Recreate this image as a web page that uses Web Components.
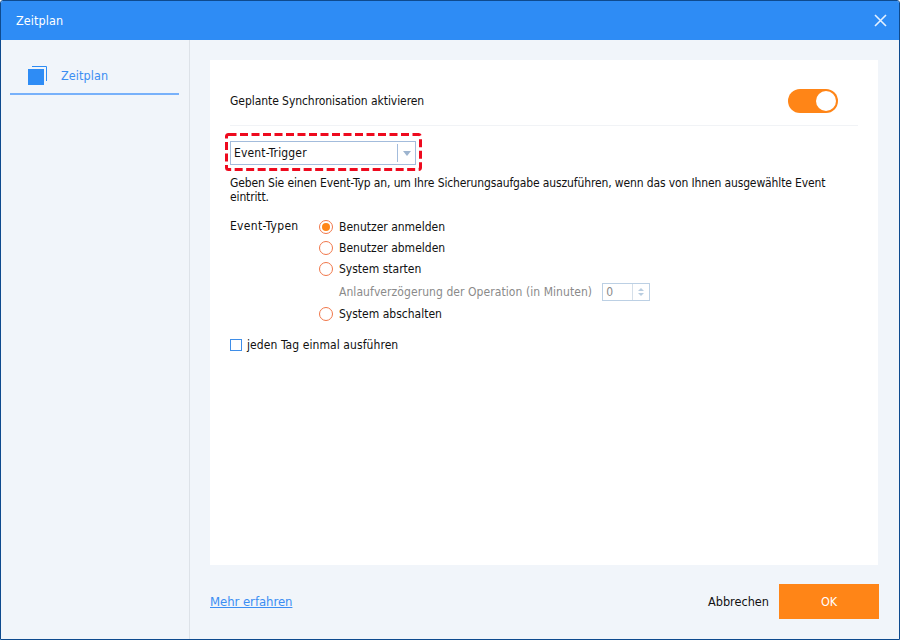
<!DOCTYPE html>
<html lang="de">
<head>
<meta charset="utf-8">
<title>Zeitplan</title>
<style>
  html, body { margin: 0; height: 100%; background: #fff; }
  body { font: 12px "DejaVu Sans", sans-serif; font-stretch: condensed; color: #111; }
</style>
</head>
<body>
<schedule-dialog></schedule-dialog>

<script>
class TitleBar extends HTMLElement {
  constructor() {
    super();
    this.attachShadow({ mode: 'open' });
    this.shadowRoot.innerHTML = `
      <style>
        :host {
          display: flex;
          align-items: center;
          justify-content: space-between;
          height: 39px;
          padding: 0 12px 0 15px;
          background: #2e8cf5;
          color: #fff;
          font-size: 12.5px;
          letter-spacing: .1px;
          flex: none;
        }
        svg { display: block; }
      </style>
      <span><slot></slot></span>
      <svg width="13" height="13" viewBox="0 0 13 13">
        <path d="M1 1l11 11M12 1L1 12" stroke="#e4f1ff" stroke-width="1.6" fill="none"/>
      </svg>
    `;
  }
}

class SideNav extends HTMLElement {
  constructor() {
    super();
    this.attachShadow({ mode: 'open' });
    this.shadowRoot.innerHTML = `
      <style>
        :host {
          display: block;
          background: #f1f5fa;
          border-right: 1px solid #dde2e8;
          padding-top: 20px;
        }
        .item {
          display: flex;
          align-items: center;
          gap: 14px;
          height: 30px;
          margin: 0 10px 0 9px;
          padding: 0 0 3px 18px;
          border-bottom: 2px solid #78b1fa;
          color: #3b8ef3;
          font-size: 12.5px;
          letter-spacing: .1px;
        }
        svg { display: block; }
      </style>
      <div class="item">
        <svg width="19" height="19" viewBox="0 0 19 19">
          <path d="M4 .5h14.5V15" fill="none" stroke="#2e8cf5" stroke-width="1"/>
          <rect x="0" y="3" width="16" height="16" fill="#2e8cf5"/>
        </svg>
        <slot></slot>
      </div>
    `;
  }
}

class ToggleSwitch extends HTMLElement {
  constructor() {
    super();
    this.attachShadow({ mode: 'open' });
    this.shadowRoot.innerHTML = `
      <style>
        :host {
          display: flex;
          justify-content: flex-end;
          align-items: center;
          box-sizing: border-box;
          width: 50px;
          height: 24px;
          padding-right: 2px;
          border-radius: 12px;
          background: #ff8517;
        }
        i { width: 20px; height: 20px; border-radius: 50%; background: #fff; }
      </style>
      <i></i>
    `;
  }
}

class SelectBox extends HTMLElement {
  constructor() {
    super();
    this.attachShadow({ mode: 'open' });
    this.shadowRoot.innerHTML = `
      <style>
        :host {
          display: flex;
          align-items: center;
          box-sizing: border-box;
          width: 186px;
          height: 24px;
          border: 1px solid #a3bcdc;
          background: #fff;
          padding-left: 3px;
          letter-spacing: .15px;
        }
        .label { flex: 1; }
        .sep { width: 1px; height: 18px; background: #a3bcdc; }
        .arrow { width: 17px; display: flex; justify-content: center; }
        .arrow i {
          border: 4.5px solid transparent;
          border-top: 5px solid #9db4cf;
          border-bottom: 0;
        }
      </style>
      <span class="label"><slot></slot></span>
      <span class="sep"></span>
      <span class="arrow"><i></i></span>
    `;
  }
}

class RadioOption extends HTMLElement {
  constructor() {
    super();
    this.attachShadow({ mode: 'open' });
    this.shadowRoot.innerHTML = `
      <style>
        :host {
          display: flex;
          align-items: center;
          gap: 6px;
          height: 21px;
        }
        .dot {
          box-sizing: border-box;
          width: 14px;
          height: 14px;
          border: 1px solid #f0774a;
          border-radius: 50%;
          display: flex;
          align-items: center;
          justify-content: center;
          background: #fff;
        }
        :host([checked]) .dot::after {
          content: '';
          width: 8px;
          height: 8px;
          border-radius: 50%;
          background: #ff8517;
        }
      </style>
      <span class="dot"></span>
      <slot></slot>
    `;
  }
}

class SpinBox extends HTMLElement {
  constructor() {
    super();
    this.attachShadow({ mode: 'open' });
    this.shadowRoot.innerHTML = `
      <style>
        :host {
          display: flex;
          align-items: center;
          box-sizing: border-box;
          width: 48px;
          height: 18px;
          border: 1px solid #bcd0e4;
          background: #fff;
          color: #8a8a8a;
          padding-left: 3px;
        }
        .value { flex: 1; }
        .sep { width: 1px; height: 16px; background: #d5dfe9; }
        .arrows {
          width: 16px;
          display: flex;
          flex-direction: column;
          align-items: center;
          gap: 2px;
        }
        .arrows i { border: 3.5px solid transparent; }
        .up { border-bottom: 3.5px solid #b9cde0 !important; border-top: 0 !important; }
        .down { border-top: 3.5px solid #b9cde0 !important; border-bottom: 0 !important; }
      </style>
      <span class="value"><slot></slot></span>
      <span class="sep"></span>
      <span class="arrows"><i class="up"></i><i class="down"></i></span>
    `;
  }
}

class SchedulePanel extends HTMLElement {
  constructor() {
    super();
    this.attachShadow({ mode: 'open' });
    this.shadowRoot.innerHTML = `
      <style>
        :host {
          display: block;
          background: #fff;
          padding: 0 20px;
          height: 505px;
        }
        .head {
          display: flex;
          align-items: center;
          justify-content: space-between;
          height: 66px;
          padding: 16px 20px 0 0;
          border-bottom: 1px solid #f1f3f6;
          box-sizing: border-box;
          margin-bottom: 7px;
          letter-spacing: -.06px;
        }
        .trigger {
          position: relative;
          display: inline-block;
          vertical-align: top;
          margin-left: -5px;
          padding: 8px 6px 6px 5px;
        }
        .trigger svg { position: absolute; left: 0; top: 0; }
        .desc { margin: 5px 0 12px; line-height: 14px; letter-spacing: -.13px; }
        .types { display: flex; }
        .types .name { width: 89px; padding-top: 3px; letter-spacing: .3px; }
        .delay {
          display: flex;
          align-items: center;
          gap: 10px;
          height: 22px;
          padding: 2px 0 0 20px;
          color: #8a8a8a;
          letter-spacing: .07px;
        }
        .once {
          display: flex;
          align-items: center;
          gap: 5px;
          margin-top: 10px;
          height: 21px;
          letter-spacing: .08px;
        }
        .box {
          box-sizing: border-box;
          width: 12px;
          height: 12px;
          border: 1px solid #3f8ee8;
          background: #fff;
        }
      </style>
      <div class="head">
        <span>Geplante Synchronisation aktivieren</span>
        <toggle-switch></toggle-switch>
      </div>
      <div class="trigger">
        <svg width="197" height="38" viewBox="0 0 197 38">
          <rect x="1.5" y="1.5" width="194" height="35" rx="2" fill="none" stroke="#ee0a1e" stroke-width="3" stroke-dasharray="8 3.5"/>
        </svg>
        <select-box>Event-Trigger</select-box>
      </div>
      <p class="desc">Geben Sie einen Event-Typ an, um Ihre Sicherungsaufgabe auszuführen, wenn das von Ihnen ausgewählte Event eintritt.</p>
      <div class="types">
        <span class="name">Event-Typen</span>
        <div>
          <radio-option checked>Benutzer anmelden</radio-option>
          <radio-option>Benutzer abmelden</radio-option>
          <radio-option>System starten</radio-option>
          <div class="delay"><span>Anlaufverzögerung der Operation (in Minuten)</span><spin-box>0</spin-box></div>
          <radio-option>System abschalten</radio-option>
        </div>
      </div>
      <div class="once"><span class="box"></span><span>jeden Tag einmal ausführen</span></div>
    `;
  }
}

class DialogFooter extends HTMLElement {
  constructor() {
    super();
    this.attachShadow({ mode: 'open' });
    this.shadowRoot.innerHTML = `
      <style>
        :host {
          display: flex;
          align-items: center;
          height: 35px;
          margin-top: 19px;
          margin-right: -1px;
        }
        a { color: #3b8ef3; text-decoration: underline; font-size: 13px; letter-spacing: -.05px; }
        .cancel { margin-left: auto; margin-right: 10px; color: #111; font-size: 12.6px; }
        .ok {
          width: 100px;
          height: 35px;
          display: flex;
          align-items: center;
          justify-content: center;
          background: #ff8517;
          color: #fff;
          font-size: 12.5px;
        }
      </style>
      <a href="#">Mehr erfahren</a>
      <span class="cancel">Abbrechen</span>
      <span class="ok">OK</span>
    `;
  }
}

class ScheduleDialog extends HTMLElement {
  constructor() {
    super();
    this.attachShadow({ mode: 'open' });
    this.shadowRoot.innerHTML = `
      <style>
        :host {
          display: flex;
          flex-direction: column;
          box-sizing: border-box;
          width: 900px;
          height: 640px;
          border: 1px solid #0e4a8e;
          border-radius: 3px 3px 0 0;
          background: #f1f5fa;
          overflow: hidden;
        }
        .body {
          flex: 1;
          display: grid;
          grid-template-columns: 189px 1fr;
          min-height: 0;
        }
        main { padding: 20px 21px 0 20px; }
      </style>
      <title-bar>Zeitplan</title-bar>
      <div class="body">
        <side-nav>Zeitplan</side-nav>
        <main>
          <schedule-panel></schedule-panel>
          <dialog-footer></dialog-footer>
        </main>
      </div>
    `;
  }
}

customElements.define('title-bar', TitleBar);
customElements.define('side-nav', SideNav);
customElements.define('toggle-switch', ToggleSwitch);
customElements.define('select-box', SelectBox);
customElements.define('radio-option', RadioOption);
customElements.define('spin-box', SpinBox);
customElements.define('schedule-panel', SchedulePanel);
customElements.define('dialog-footer', DialogFooter);
customElements.define('schedule-dialog', ScheduleDialog);
</script>
</body>
</html>
